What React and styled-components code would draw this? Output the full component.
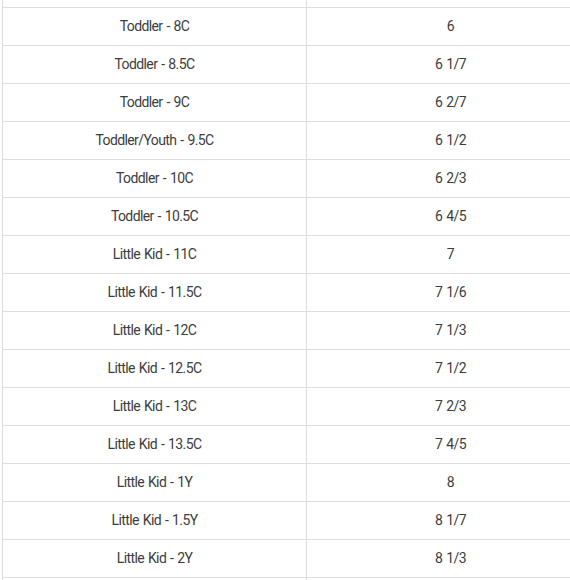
import React from "react";
import styled, { createGlobalStyle } from "styled-components";

const Global = createGlobalStyle`
  html, body { margin: 0; padding: 0; background: #fff; overflow: hidden; }
  body { font-family: Roboto, "Liberation Sans", sans-serif; }
`;

const Page = styled.div`
  width: 570px;
  height: 580px;
  overflow: hidden;
  padding-left: 2px;
  box-sizing: border-box;
`;

const Table = styled.table`
  border-collapse: collapse;
  table-layout: fixed;
  width: 592px;
  margin-top: -31px;
`;

const Cell = styled.td`
  border: 1px solid #dedede;
  height: 38px;
  padding: 0 0 2px;
  box-sizing: border-box;
  text-align: center;
  vertical-align: middle;
  font-size: 14px;
  color: #3d3d3d;
  letter-spacing: -0.6px;
  word-spacing: 1px;
`;

const rows = [
  ["Toddler - 7.5C", "5 5/6"],
  ["Toddler - 8C", "6"],
  ["Toddler - 8.5C", "6 1/7"],
  ["Toddler - 9C", "6 2/7"],
  ["Toddler/Youth - 9.5C", "6 1/2"],
  ["Toddler - 10C", "6 2/3"],
  ["Toddler - 10.5C", "6 4/5"],
  ["Little Kid - 11C", "7"],
  ["Little Kid - 11.5C", "7 1/6"],
  ["Little Kid - 12C", "7 1/3"],
  ["Little Kid - 12.5C", "7 1/2"],
  ["Little Kid - 13C", "7 2/3"],
  ["Little Kid - 13.5C", "7 4/5"],
  ["Little Kid - 1Y", "8"],
  ["Little Kid - 1.5Y", "8 1/7"],
  ["Little Kid - 2Y", "8 1/3"],
  ["Little Kid - 2.5Y", "8 1/2"],
];

export default function App() {
  return (
    <>
      <Global />
      <Page>
        <Table>
          <colgroup>
            <col style={{ width: 304 }} />
            <col style={{ width: 288 }} />
          </colgroup>
          <tbody>
            {rows.map(([a, b]) => (
              <tr key={a}>
                <Cell>{a}</Cell>
                <Cell>{b}</Cell>
              </tr>
            ))}
          </tbody>
        </Table>
      </Page>
    </>
  );
}
